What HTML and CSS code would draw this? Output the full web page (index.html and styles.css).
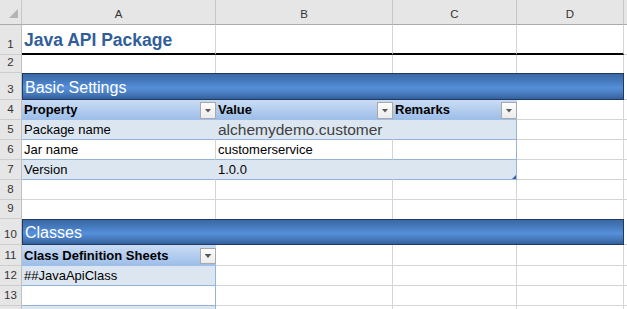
FILE: index.html
```html
<!doctype html>
<html lang="en">
  <head>
    <meta charset="UTF-8" />
    <title>Java API Package</title>
    <link rel="stylesheet" href="styles.css">
  </head>
  <body>
    <div class="sheet">
      <div class="row row-head">
        <div class="corner"><span class="corner-tri"></span></div>
        <div class="colh">A</div>
        <div class="colh">B</div>
        <div class="colh">C</div>
        <div class="colh">D</div>
        <div class="colh rest"></div>
      </div>

      <div class="row row-title">
        <div class="num">1</div>
        <div class="cell title">Java API Package</div>
        <div class="cell"></div>
        <div class="cell"></div>
        <div class="cell"></div>
        <div class="cell rest"></div>
      </div>

      <div class="row row-gap">
        <div class="num">2</div>
        <div class="cell"></div>
        <div class="cell"></div>
        <div class="cell"></div>
        <div class="cell"></div>
        <div class="cell rest"></div>
      </div>

      <div class="row row-band">
        <div class="num">3</div>
        <div class="band">Basic Settings</div>
        <div class="cell rest"></div>
      </div>

      <div class="row">
        <div class="num">4</div>
        <div class="th"><span class="lbl">Property</span><span class="filter"><i></i></span></div>
        <div class="th"><span class="lbl">Value</span><span class="filter"><i></i></span></div>
        <div class="th"><span class="lbl">Remarks</span><span class="filter"><i></i></span></div>
        <div class="cell"></div>
        <div class="cell rest"></div>
      </div>

      <div class="row">
        <div class="num">5</div>
        <div class="cell tb">Package name</div>
        <div class="cell tb big">alchemydemo.customer</div>
        <div class="cell tb last"></div>
        <div class="cell"></div>
        <div class="cell rest"></div>
      </div>

      <div class="row">
        <div class="num">6</div>
        <div class="cell tw">Jar name</div>
        <div class="cell tw">customerservice</div>
        <div class="cell tw last"></div>
        <div class="cell"></div>
        <div class="cell rest"></div>
      </div>

      <div class="row">
        <div class="num">7</div>
        <div class="cell tb">Version</div>
        <div class="cell tb">1.0.0</div>
        <div class="cell tb last handle"></div>
        <div class="cell"></div>
        <div class="cell rest"></div>
      </div>

      <div class="row">
        <div class="num">8</div>
        <div class="cell"></div>
        <div class="cell"></div>
        <div class="cell"></div>
        <div class="cell"></div>
        <div class="cell rest"></div>
      </div>

      <div class="row row-gap9">
        <div class="num">9</div>
        <div class="cell"></div>
        <div class="cell"></div>
        <div class="cell"></div>
        <div class="cell"></div>
        <div class="cell rest"></div>
      </div>

      <div class="row row-band short">
        <div class="num">10</div>
        <div class="band">Classes</div>
        <div class="cell rest"></div>
      </div>

      <div class="row row-th2">
        <div class="num">11</div>
        <div class="th"><span class="lbl">Class Definition Sheets</span><span class="filter"><i></i></span></div>
        <div class="cell"></div>
        <div class="cell"></div>
        <div class="cell"></div>
        <div class="cell rest"></div>
      </div>

      <div class="row">
        <div class="num">12</div>
        <div class="cell tb last">##JavaApiClass</div>
        <div class="cell"></div>
        <div class="cell"></div>
        <div class="cell"></div>
        <div class="cell rest"></div>
      </div>

      <div class="row">
        <div class="num">13</div>
        <div class="cell tw last"></div>
        <div class="cell"></div>
        <div class="cell"></div>
        <div class="cell"></div>
        <div class="cell rest"></div>
      </div>

      <div class="row row-cut">
        <div class="num"></div>
        <div class="cell tb last"></div>
        <div class="cell"></div>
        <div class="cell"></div>
        <div class="cell"></div>
        <div class="cell rest"></div>
      </div>
    </div>
  </body>
</html>
```

FILE: styles.css
```css
* {
  margin: 0;
  padding: 0;
  box-sizing: border-box;
}

body {
  width: 627px;
  height: 309px;
  overflow: hidden;
  background: #fff;
  font-family: "Liberation Sans", Arial, sans-serif;
  font-size: 13px;
  color: #000;
}

.row {
  display: grid;
  grid-template-columns: 22px 194px 177px 124px 107px 1fr;
  height: 20px;
}

.row-head {
  height: 25px;
}

.row-title {
  height: 30px;
}

.row-gap {
  height: 18px;
}

.row-gap9 {
  height: 19px;
}

.row-band {
  height: 27px;
}

.row-band.short {
  height: 26px;
}

.row-th2 {
  height: 21px;
}

/* last row, only its top shows */
.row-cut {
  height: 3px;
}

.row-cut .num,
.row-cut .cell {
  border-bottom: none;
}

/* column and row headers */
.corner,
.colh {
  background: #e6e6e6;
  border-right: 1px solid #c6c6c6;
  border-bottom: 1px solid #ababab;
}

.corner {
  display: flex;
  justify-content: flex-end;
  align-items: flex-end;
  padding: 0 3px 6px 0;
}

.corner-tri {
  width: 9px;
  height: 9px;
  background: #b4b4b4;
  clip-path: polygon(100% 0, 100% 100%, 0 100%);
}

.colh {
  display: flex;
  align-items: flex-end;
  justify-content: center;
  padding-bottom: 4px;
  font-size: 11.5px;
  color: #333;
}

.colh.rest {
  border-right: none;
}

.num {
  background: #e6e6e6;
  border-right: 1px solid #bfbfbf;
  border-bottom: 1px solid #cdcdcd;
  display: flex;
  align-items: flex-end;
  justify-content: center;
  padding-bottom: 2px;
  line-height: 15px;
  font-size: 11.5px;
  color: #333;
}

/* cells */
.cell {
  border-right: 1px solid #d4d4d4;
  border-bottom: 1px solid #d4d4d4;
  display: flex;
  align-items: flex-end;
  padding: 0 0 2px 2px;
  line-height: 15px;
  white-space: nowrap;
  overflow: hidden;
}

.cell.rest {
  border-right: none;
}

.row-title .cell {
  border-bottom: 2px solid #000;
  padding-bottom: 3px;
}

.row-title .cell.rest {
  border-bottom: 1px solid #d4d4d4;
}

.row-gap .cell,
.row-gap9 .cell {
  border-bottom: none;
}

.title {
  font-size: 17.5px;
  line-height: 20px;
  font-weight: bold;
  color: #315e98;
}

/* section band */
.band {
  grid-column: span 4;
  border: 1px solid #1f3a63;
  background: linear-gradient(
    to bottom,
    #3a68a4 0%,
    #467bbf 30%,
    #5590d9 55%,
    #4679bb 80%,
    #33609b 100%
  );
  color: #fff;
  font-size: 16px;
  line-height: 19px;
  display: flex;
  align-items: flex-end;
  padding: 0 0 2px 2px;
}

/* table header */
.th {
  display: flex;
  align-items: flex-end;
  padding-left: 2px;
  background: linear-gradient(to bottom, #cadcf3, #9ebfe9);
  border-bottom: 1px solid #9ebfe9;
  font-weight: bold;
  line-height: 15px;
  white-space: nowrap;
}

.th .lbl {
  padding-bottom: 2px;
}

.filter {
  margin-left: auto;
  width: 16px;
  height: 17px;
  border: 1px solid #a9a9a9;
  background: linear-gradient(to bottom, #fdfdfd, #ececec);
  display: flex;
  align-items: center;
  justify-content: center;
}

.row-th2 .filter {
  height: 16px;
  margin-bottom: 1px;
}

.filter i {
  width: 7px;
  height: 4px;
  background: #5a5a5a;
  clip-path: polygon(0 0, 100% 0, 50% 100%);
}

/* table body */
.tb {
  background: #dce6f1;
  border-right-color: #dce6f1;
  border-bottom-color: #95b3d7;
}

.tw {
  border-bottom-color: #95b3d7;
}

.tb.last,
.tw.last {
  border-right-color: #95b3d7;
}

.big {
  font-size: 15.5px;
  color: #404040;
}

.handle {
  position: relative;
}

.handle::after {
  content: "";
  position: absolute;
  right: 0;
  bottom: 0;
  width: 4px;
  height: 4px;
  background: #3c5fb4;
  clip-path: polygon(100% 0, 100% 100%, 0 100%);
}
```
